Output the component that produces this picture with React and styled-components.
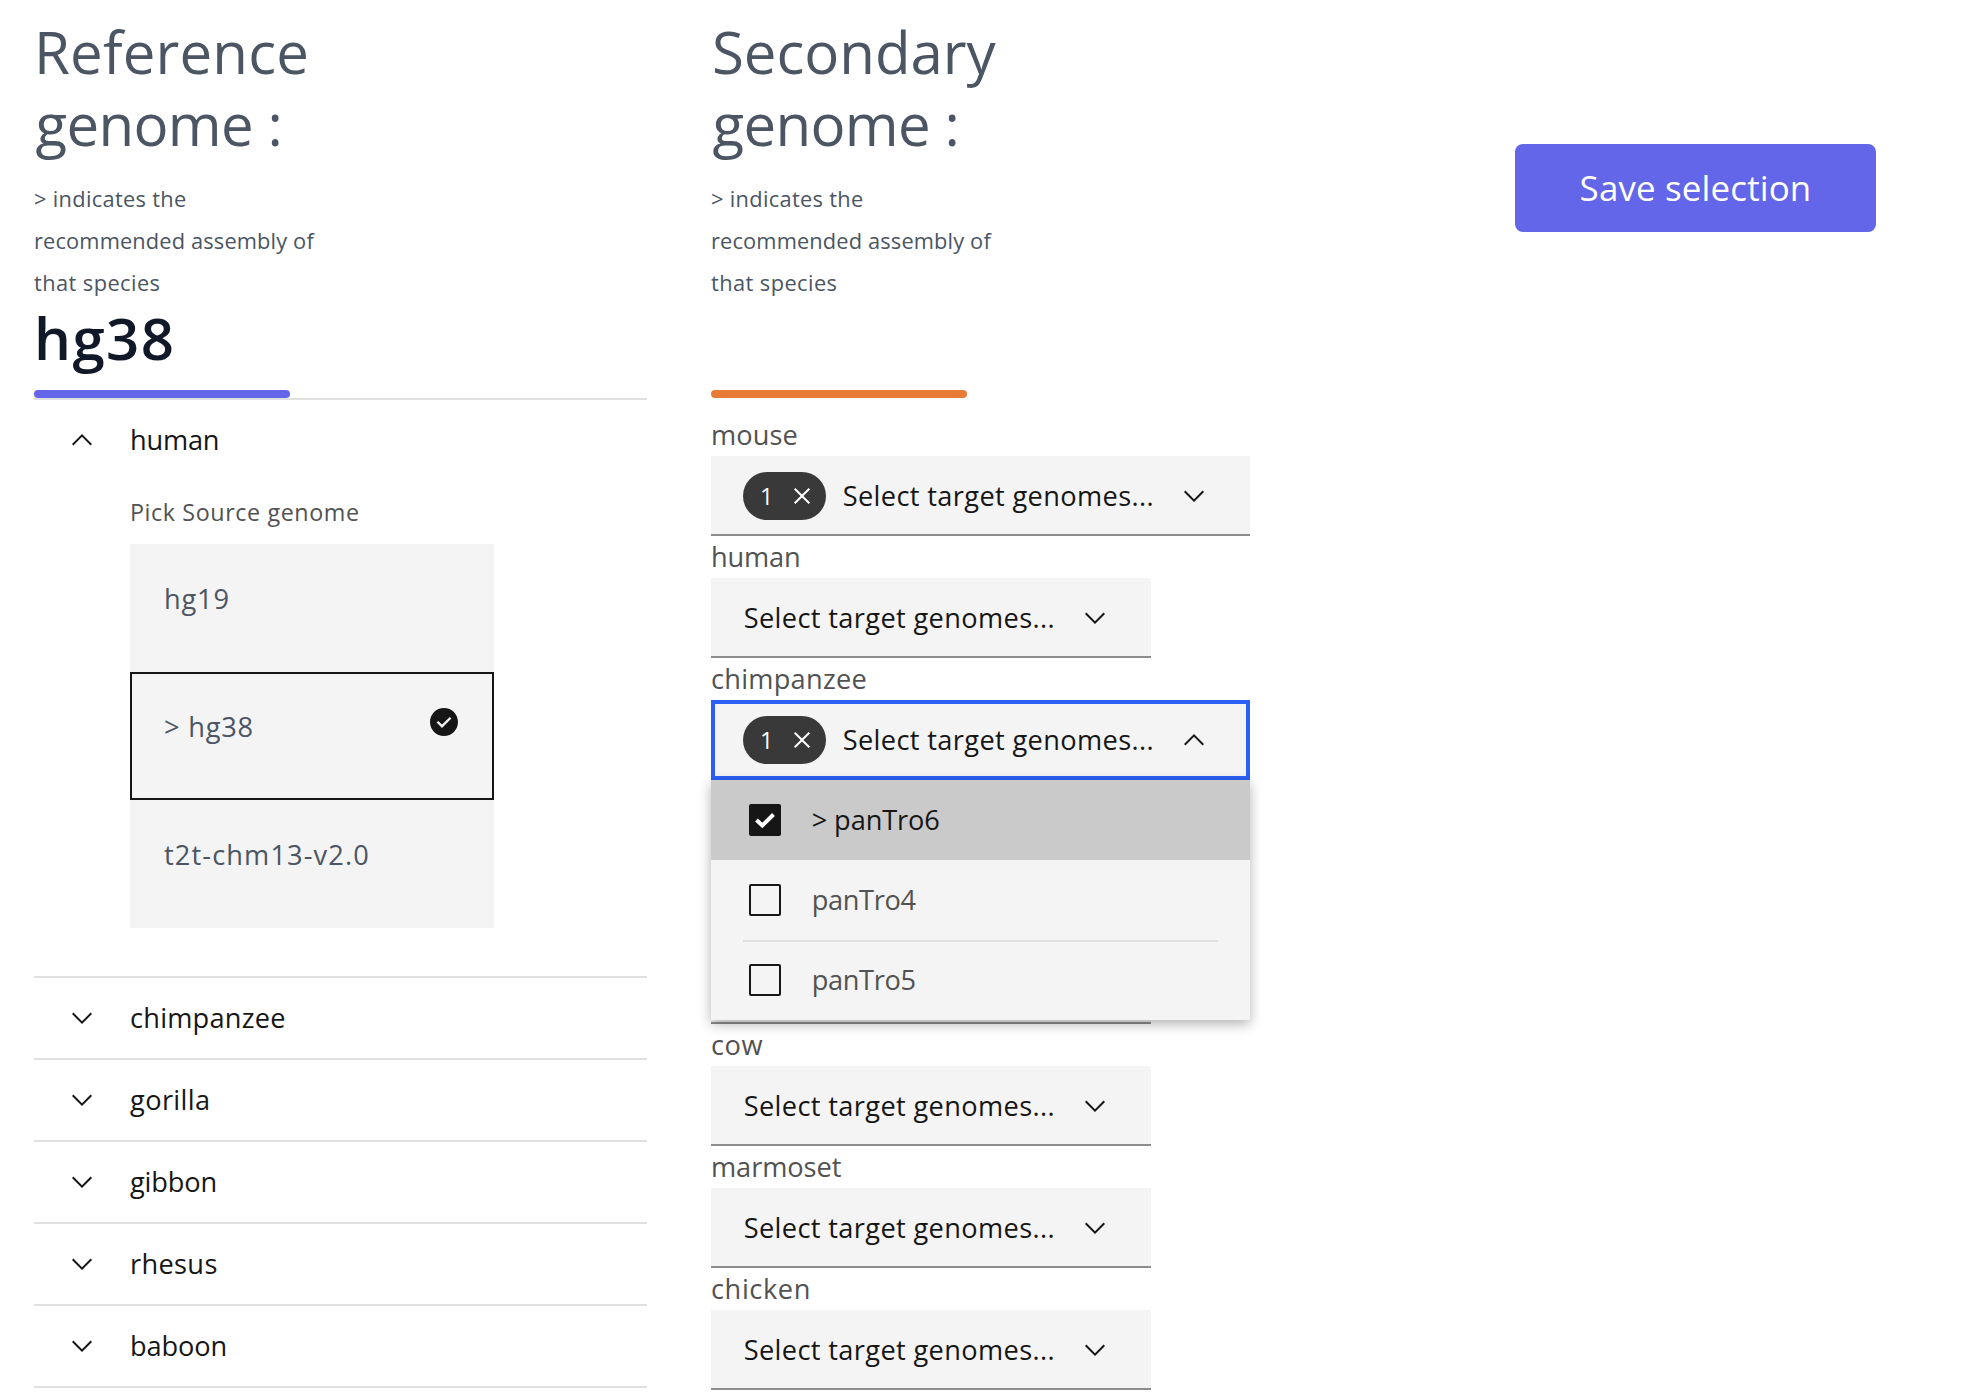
import React from "react";
import styled, { createGlobalStyle } from "styled-components";

const GlobalStyle = createGlobalStyle`
  * { box-sizing: border-box; }
  body {
    margin: 0;
    background: #ffffff;
    font-family: "Open Sans", "Liberation Sans", sans-serif;
    color: #161616;
    overflow: hidden;
  }
  button { font-family: inherit; }
`;

const Page = styled.main`
  display: flex;
  align-items: flex-start;
  height: 1394px;
  padding: 16px 96px 0 34px;
  overflow: hidden;
`;

const Column = styled.section`
  width: ${(p) => p.$width}px;
  margin-right: ${(p) => p.$gap}px;
  flex: none;
`;

const Text = styled.span`
  letter-spacing: ${(p) => p.$ls ?? 0}px;
  white-space: pre;
`;

const Intro = styled.header`
  height: 374px;
`;

const Heading = styled.h2`
  margin: 0 0 18px;
  font-size: 58.2px;
  line-height: 72px;
  font-weight: 400;
  color: #4b5563;
`;

const Line = styled.div`
  padding-left: ${(p) => p.$indent ?? 0}px;
  white-space: pre;
`;

const Hint = styled.p`
  margin: 0;
  font-size: 21.8px;
  line-height: 42px;
  color: #4b5563;
`;

const Assembly = styled.div`
  margin-top: -2px;
  font-size: 58.2px;
  line-height: 72px;
  font-weight: 600;
  color: #111827;
`;

const Bar = styled.div`
  width: 256px;
  height: 8px;
  border-radius: 4px;
  background: ${(p) => p.$color};
`;

const Accordion = styled.ul`
  margin: 0;
  padding: 0;
  list-style: none;
  border-bottom: 2px solid #e0e0e0;
`;

const AccordionItem = styled.li`
  border-top: 2px solid #e0e0e0;
`;

const AccordionButton = styled.button`
  display: flex;
  align-items: center;
  gap: 32px;
  width: 100%;
  height: 80px;
  padding: 0 0 0 32px;
  border: 0;
  background: none;
  font-size: 27.2px;
  line-height: 40px;
  color: #161616;
`;

const AccordionBody = styled.div`
  padding: 16px 0 48px 96px;
`;

const GroupLabel = styled.div`
  margin-bottom: 16px;
  font-size: 23.3px;
  line-height: 32px;
  color: #525252;
`;

const Tile = styled.div`
  display: flex;
  align-items: flex-start;
  justify-content: space-between;
  width: 364px;
  height: 128px;
  padding: 32px;
  border: 2px solid ${(p) => (p.$selected ? "#161616" : "#f4f4f4")};
  background: #f4f4f4;
  font-size: 27.2px;
  line-height: 42px;
  color: #4b5563;
`;

const Icon = styled.svg`
  display: block;
  flex: none;
  width: 32px;
  height: 32px;
  fill: ${(p) => p.$fill || "#161616"};
`;

const FieldLabel = styled.div`
  height: 42px;
  font-size: 27.2px;
  line-height: 42px;
  color: #525252;
`;

const Fields = styled.div`
  padding-top: 16px;
`;

const Field = styled.div`
  position: relative;
`;

const SelectBox = styled.div`
  display: flex;
  align-items: center;
  width: ${(p) => (p.$wide ? 539 : 440)}px;
  height: 80px;
  padding: 0 40px 0 32px;
  background: #f4f4f4;
  box-shadow: ${(p) => (p.$open ? "inset 0 0 0 4px #2a60f5" : "inset 0 -2px 0 #8d8d8d")};
  font-size: 27.2px;
  line-height: 42px;
`;

const Tag = styled.span`
  display: flex;
  align-items: center;
  justify-content: space-between;
  width: 83px;
  height: 48px;
  margin-right: 16px;
  padding: 0 8px 0 17px;
  border-radius: 24px;
  background: #393939;
  color: #ffffff;
  font-size: 23.3px;
  line-height: 32px;
`;

const Placeholder = styled.span`
  flex: 1;
  padding-left: 0.7px;
  white-space: pre;
`;

const Menu = styled.div`
  position: absolute;
  z-index: 2;
  left: 0;
  top: 100%;
  width: 539px;
  background: #f4f4f4;
  box-shadow: 0 4px 12px rgba(0, 0, 0, 0.3);
`;

const Option = styled.div`
  height: 80px;
  padding: 0 32px;
  background: ${(p) => (p.$active ? "#cacaca" : "transparent")};
  color: ${(p) => (p.$active ? "#161616" : "#525252")};
  font-size: 27.2px;
  line-height: 40px;
`;

const OptionInner = styled.div`
  display: flex;
  align-items: center;
  gap: 30.7px;
  height: 80px;
  padding-left: 6px;
  box-shadow: ${(p) => (p.$divided ? "inset 0 2px 0 #e0e0e0" : "none")};
`;

const OptionText = styled(Text)`
  padding-bottom: 1px;
`;

const CheckBox = styled.span`
  display: flex;
  align-items: center;
  justify-content: center;
  width: 32px;
  height: 32px;
  border: 2px solid #161616;
  border-radius: 2px;
  background: ${(p) => (p.$checked ? "#161616" : "transparent")};
`;

const SaveButton = styled.button`
  width: 361px;
  height: 88px;
  margin-top: 128px;
  padding: 0;
  border: 0;
  border-radius: 8px;
  background: #6366e8;
  color: #ffffff;
  font-size: 34.9px;
  line-height: 56px;
`;

const ChevronDown = () => (
  <Icon viewBox="0 0 16 16"><path d="M8 11L3 6 3.7 5.3 8 9.6 12.3 5.3 13 6z" /></Icon>
);
const ChevronUp = () => (
  <Icon viewBox="0 0 16 16"><path d="M8 5L13 10 12.3 10.7 8 6.4 3.7 10.7 3 10z" /></Icon>
);
const Close = () => (
  <Icon viewBox="0 0 16 16" $fill="#ffffff">
    <path d="M12 4.7L11.3 4 8 7.3 4.7 4 4 4.7 7.3 8 4 11.3 4.7 12 8 8.7 11.3 12 12 11.3 8.7 8z" />
  </Icon>
);
const CheckFilled = () => (
  <Icon viewBox="0 0 16 16">
    <path d="M8 1C4.1 1 1 4.1 1 8s3.1 7 7 7 7-3.1 7-7-3.1-7-7-7zM7 11L4.3 8.3 5.1 7.5 7 9.3 10.9 5.5 11.7 6.3z" />
  </Icon>
);
const Tick = () => (
  <svg width="22" height="20" viewBox="0 0 22 20" fill="none" stroke="#ffffff" strokeWidth="4">
    <path d="M2.5 10L8.3 15.5 19.5 4.5" />
  </svg>
);

const SPECIES = [
  ["chimpanzee", 0.22],
  ["gorilla", 0.38],
  ["gibbon", -0.15],
  ["rhesus", 0.34],
  ["baboon", -0.14],
];

function GenomeIntro({ title, ls, indent, name }) {
  return (
    <Intro>
      <Heading>
        <Line $indent={indent}><Text $ls={ls}>{title}</Text></Line>
        <Line $indent={1.5}><Text $ls={-0.65}>genome :</Text></Line>
      </Heading>
      <Hint>
        <Line><Text $ls={0.32}>&gt; indicates the</Text></Line>
        <Line><Text $ls={0.15}>recommended assembly of</Text></Line>
        <Line><Text $ls={0.43}>that species</Text></Line>
      </Hint>
      {name && <Assembly><Text $ls={1.44}>{name}</Text></Assembly>}
    </Intro>
  );
}

function Select({ label, ls, selected, open, children }) {
  return (
    <Field>
      <FieldLabel>{label && <Text $ls={ls}>{label}</Text>}</FieldLabel>
      <SelectBox $wide={selected} $open={open}>
        {selected && <Tag>1<Close /></Tag>}
        <Placeholder>{label && <Text $ls={0.36}>Select target genomes...</Text>}</Placeholder>
        {open ? <ChevronUp /> : <ChevronDown />}
      </SelectBox>
      {children}
    </Field>
  );
}

export default function App() {
  return (
    <>
      <GlobalStyle />
      <Page>
        <Column $width={613} $gap={64}>
          <GenomeIntro title="Reference" ls={0.18} indent={0} name="hg38" />
          <Bar $color="#6366e8" />
          <Accordion>
            <AccordionItem>
              <AccordionButton><ChevronUp /><Text $ls={-0.2}>human</Text></AccordionButton>
              <AccordionBody>
                <GroupLabel><Text $ls={0.6}>Pick Source genome</Text></GroupLabel>
                <Tile><Text $ls={0.8}>hg19</Text></Tile>
                <Tile $selected><Text $ls={0.8}>&gt; hg38</Text><CheckFilled /></Tile>
                <Tile><Text $ls={1.12}>t2t-chm13-v2.0</Text></Tile>
              </AccordionBody>
            </AccordionItem>
            {SPECIES.map(([name, ls]) => (
              <AccordionItem key={name}>
                <AccordionButton><ChevronDown /><Text $ls={ls}>{name}</Text></AccordionButton>
              </AccordionItem>
            ))}
          </Accordion>
        </Column>
        <Column $width={539} $gap={265}>
          <GenomeIntro title="Secondary" ls={-0.05} indent={1} />
          <Bar $color="#e87c36" />
          <Fields>
            <Select label="mouse" ls={0.1} selected />
            <Select label="human" ls={-0.15} />
            <Select label="chimpanzee" ls={0.25} selected open>
              <Menu>
                <Option $active>
                  <OptionInner><CheckBox $checked><Tick /></CheckBox><OptionText $ls={-0.1}>&gt; panTro6</OptionText></OptionInner>
                </Option>
                <Option>
                  <OptionInner><CheckBox /><OptionText $ls={-0.33}>panTro4</OptionText></OptionInner>
                </Option>
                <Option>
                  <OptionInner $divided><CheckBox /><OptionText $ls={-0.33}>panTro5</OptionText></OptionInner>
                </Option>
              </Menu>
            </Select>
            <Select />
            <Select />
            <Select label="cow" ls={0.58} />
            <Select label="marmoset" ls={-0.07} />
            <Select label="chicken" ls={0.6} />
          </Fields>
        </Column>
        <SaveButton><Text $ls={0.16}>Save selection</Text></SaveButton>
      </Page>
    </>
  );
}
